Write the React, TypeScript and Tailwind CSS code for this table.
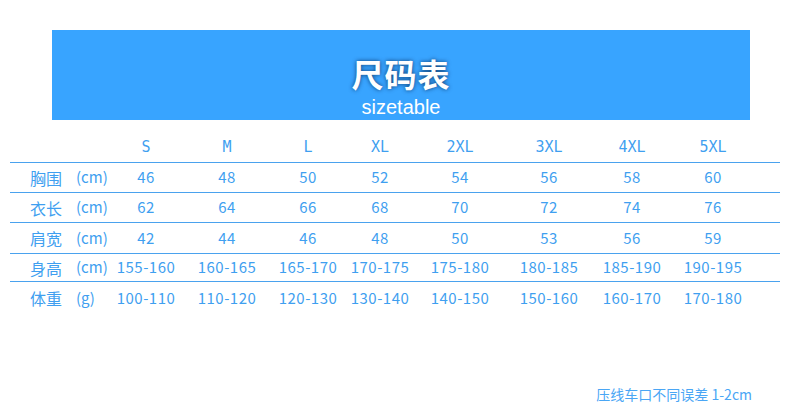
const sizes = ["S", "M", "L", "XL", "2XL", "3XL", "4XL", "5XL"]

const rows = [
    { name: "胸围", unit: "(cm)", h: "h-[30px]", values: ["46", "48", "50", "52", "54", "56", "58", "60"] },
    { name: "衣长", unit: "(cm)", h: "h-[30px]", values: ["62", "64", "66", "68", "70", "72", "74", "76"] },
    { name: "肩宽", unit: "(cm)", h: "h-[31px]", values: ["42", "44", "46", "48", "50", "53", "56", "59"] },
    { name: "身高", unit: "(cm)", h: "h-[28px]", values: ["155-160", "160-165", "165-170", "170-175", "175-180", "180-185", "185-190", "190-195"] },
    { name: "体重", unit: "(g)", h: "h-[32px]", values: ["100-110", "110-120", "120-130", "130-140", "140-150", "150-160", "160-170", "170-180"] },
]

const grid = "grid grid-cols-[96px_80px_82px_80px_64px_96px_82px_84px_78px_1fr] items-center"

export default function App() {
    return (
        <div className="w-[800px] h-[418px] bg-white overflow-hidden font-['Noto_Sans_CJK_SC',sans-serif]">
            <div className="ml-[52px] mt-[30px] w-[698px] h-[90px] bg-[#38a4ff] flex flex-col items-center pt-[27px]">
                <h1 className="text-[32px] font-bold leading-none text-white tracking-[1px] [text-shadow:0_0_4px_rgba(0,30,70,0.75)]">尺码表</h1>
                <p className="mt-[8px] text-[20px] leading-none text-white font-['Liberation_Sans',sans-serif]">sizetable</p>
            </div>

            <div className="ml-[10px] mt-[13px] w-[770px] text-[#3f9ff0]">
                <div className={`${grid} h-[30px] border-b border-[#4aa2ee]`}>
                    <div />
                    {sizes.map((s) => (
                        <div key={s} className="text-center text-[15px] font-['DejaVu_Sans_Mono',monospace]">{s}</div>
                    ))}
                </div>
                {rows.map((r, i) => (
                    <div key={r.name} className={`${grid} ${r.h} ${i < rows.length - 1 ? "border-b border-[#4aa2ee]" : ""}`}>
                        <div className="pl-[20px] flex items-center whitespace-nowrap">
                            <span className="text-[16px]">{r.name}</span>
                            <span className="ml-[14px] text-[15px]">{r.unit}</span>
                        </div>
                        {r.values.map((v, j) => (
                            <div key={j} className="text-center text-[15px] tracking-[0.5px] whitespace-nowrap">{v}</div>
                        ))}
                    </div>
                ))}
            </div>

            <p className="mt-[70px] mr-[48px] text-right text-[14px] text-[#4aa6f5]">压线车口不同误差 1-2cm</p>
        </div>
    )
}
